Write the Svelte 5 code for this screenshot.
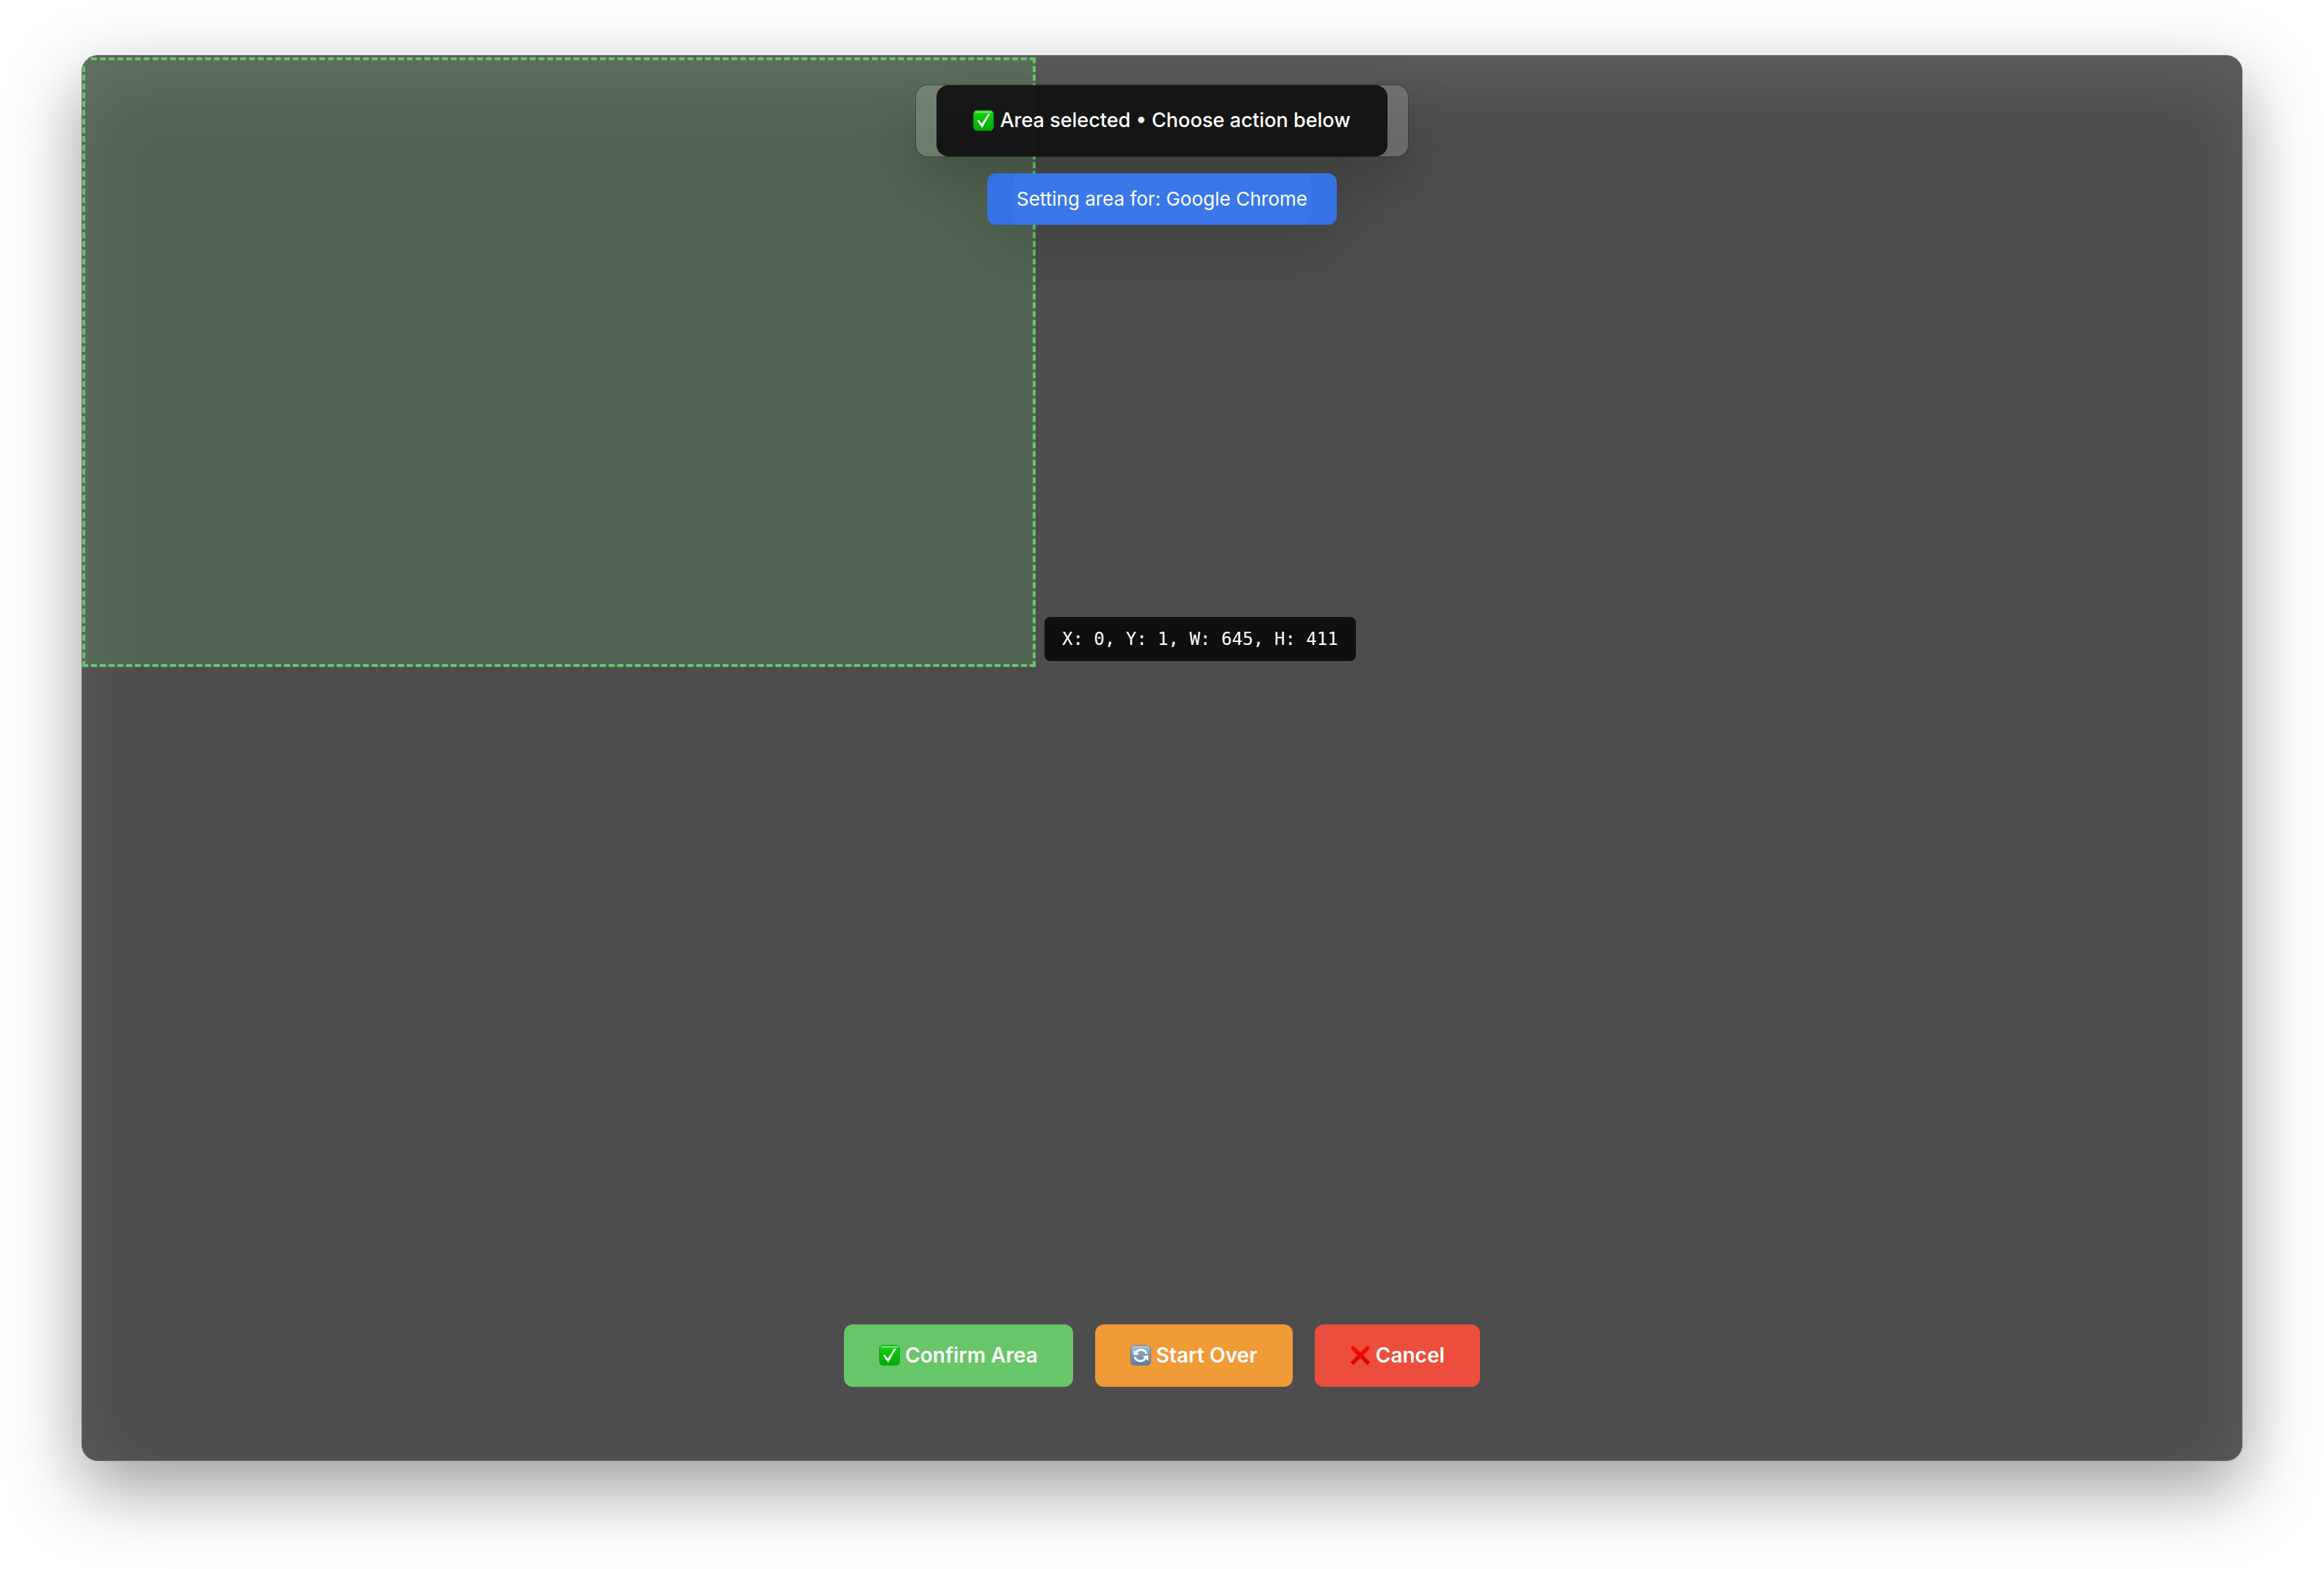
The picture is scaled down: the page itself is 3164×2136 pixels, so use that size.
<script>
  const area = { x: 0, y: 1, w: 645, h: 411 };
</script>

{#snippet check()}
  <svg class="icon" viewBox="0 0 28 28" aria-hidden="true">
    <defs>
      <linearGradient id="check-fill" x1="0" y1="0" x2="0" y2="1">
        <stop offset="0" stop-color="#4fe04f" />
        <stop offset=".16" stop-color="#12cc12" />
        <stop offset="1" stop-color="#00ab00" />
      </linearGradient>
    </defs>
    <rect x=".5" y=".5" width="27" height="27" rx="4.5" fill="url(#check-fill)" stroke="#079a14" />
    <path d="M3 2.6h22" stroke="#9af29a" stroke-width="1.6" stroke-linecap="round" opacity=".7" />
    <path d="M5.3 14.4l2.2-1.4 4.2 5.6L20.4 5h2.5L12.2 24z" fill="#fff" />
  </svg>
{/snippet}

<main class="window">
  <div class="selection"></div>
  <output class="coords">X: {area.x}, Y: {area.y}, W: {area.w}, H: {area.h}</output>

  <header class="banners">
    <div class="status-back">
      <p class="status">{@render check()}Area selected • Choose action below</p>
    </div>
    <p class="target"><span>Setting area for: Google Chrome</span></p>
  </header>

  <footer class="actions">
    <button class="confirm">{@render check()}Confirm Area</button>
    <button class="restart">
      <svg class="icon" viewBox="0 0 28 28" aria-hidden="true">
        <defs>
          <linearGradient id="cycle-fill" x1="0" y1="0" x2="0" y2="1">
            <stop offset="0" stop-color="#b4cbe2" />
            <stop offset=".3" stop-color="#86a3c1" />
            <stop offset="1" stop-color="#5f7d9c" />
          </linearGradient>
        </defs>
        <rect x=".5" y=".5" width="27" height="27" rx="4.5" fill="url(#cycle-fill)" stroke="#6b7f92" />
        <path d="M7.6 10.4A8 8 0 0 1 22 12M20.4 18A8 8 0 0 1 6 16.4" fill="none" stroke="#fff" stroke-width="2.8" />
        <path d="M4.2 6.8l.2 7.4 7.6-1.2zM24.6 21.4l-.4-7.4-7.6 1.4z" fill="#fff" />
      </svg>Start Over
    </button>
    <button class="cancel">
      <svg class="icon" viewBox="0 0 28 28" aria-hidden="true">
        <defs>
          <linearGradient id="cross-fill" x1="0" y1="0" x2="0" y2="1">
            <stop offset="0" stop-color="#ff0a05" />
            <stop offset="1" stop-color="#dc0000" />
          </linearGradient>
        </defs>
        <path d="M4.4.6L14 10.2 23.6.6l3.8 3.8L17.8 14l9.6 9.6-3.8 3.8L14 17.8l-9.6 9.6-3.8-3.8L10.2 14 .6 4.4z" fill="url(#cross-fill)" />
      </svg>Cancel
    </button>
  </footer>
</main>

<style>
  :global(body) {
    margin: 0;
    background: #fff;
  }

  .window {
    position: relative;
    box-sizing: border-box;
    display: flex;
    flex-direction: column;
    justify-content: space-between;
    min-height: calc(100vh - 222px);
    margin: 75px 111px 147px;
    padding: 40px 0 100px;
    border: 1px solid #6a6a6a;
    border-radius: 22px;
    overflow: clip;
    background: #4d4d4d;
    box-shadow:
      0 36px 100px rgba(0, 0, 0, 0.4),
      inset 0 36px 100px rgba(255, 255, 255, 0.1);
    color: #fff;
    font-family: Inter, "Liberation Sans", sans-serif;
  }

  .selection {
    position: absolute;
    top: 2px;
    left: 0;
    box-sizing: border-box;
    width: 1298px;
    height: 830px;
    border: 4px dashed #67c668;
    background: rgba(103, 198, 104, 0.2);
  }

  .coords {
    position: absolute;
    top: 764px;
    left: 1310px;
    padding: 16px 24px;
    border-radius: 8px;
    background: #0f0f0f;
    font-family: "DejaVu Sans Mono", monospace;
    font-size: 24px;
    line-height: 28px;
    white-space: nowrap;
  }

  .banners {
    position: relative;
    display: flex;
    flex-direction: column;
    align-items: center;
    gap: 23px;
  }

  .status-back {
    padding: 0 28px;
    border-radius: 16px;
    background: rgba(255, 255, 255, 0.16);
    box-shadow:
      0 0 0 1px rgba(0, 0, 0, 0.25),
      0 36px 80px rgba(0, 0, 0, 0.2);
  }

  .status {
    display: flex;
    align-items: center;
    gap: 8px;
    margin: 0;
    padding: 31px 50px 32px;
    border-radius: 16px;
    background: rgba(16, 16, 16, 0.94);
    font-size: 27px;
    font-weight: 500;
    line-height: 34px;
  }

  .target {
    margin: 0;
    padding: 0 35px;
    border-radius: 12px;
    background: #3672e4;
    box-shadow: 0 36px 80px rgba(0, 0, 0, 0.14);
    font-size: 26px;
    font-weight: 400;
    line-height: 70px;
  }

  .target span {
    display: block;
    padding: 0 5px;
    border-radius: 12px;
    background: #3a77e9;
  }

  .actions {
    position: relative;
    display: flex;
    justify-content: center;
    gap: 30px;
  }

  button {
    display: flex;
    align-items: center;
    gap: 7px;
    padding: 25px 48px 26px;
    border: 0;
    border-radius: 12px;
    color: #fff;
    font: 600 28px/34px Inter, "Liberation Sans", sans-serif;
  }

  .confirm {
    background: #67c668;
  }

  .restart {
    background: #f19a38;
  }

  .cancel {
    background: #eb4e3d;
  }

  .icon {
    flex: none;
    width: 28px;
    height: 28px;
  }
</style>
